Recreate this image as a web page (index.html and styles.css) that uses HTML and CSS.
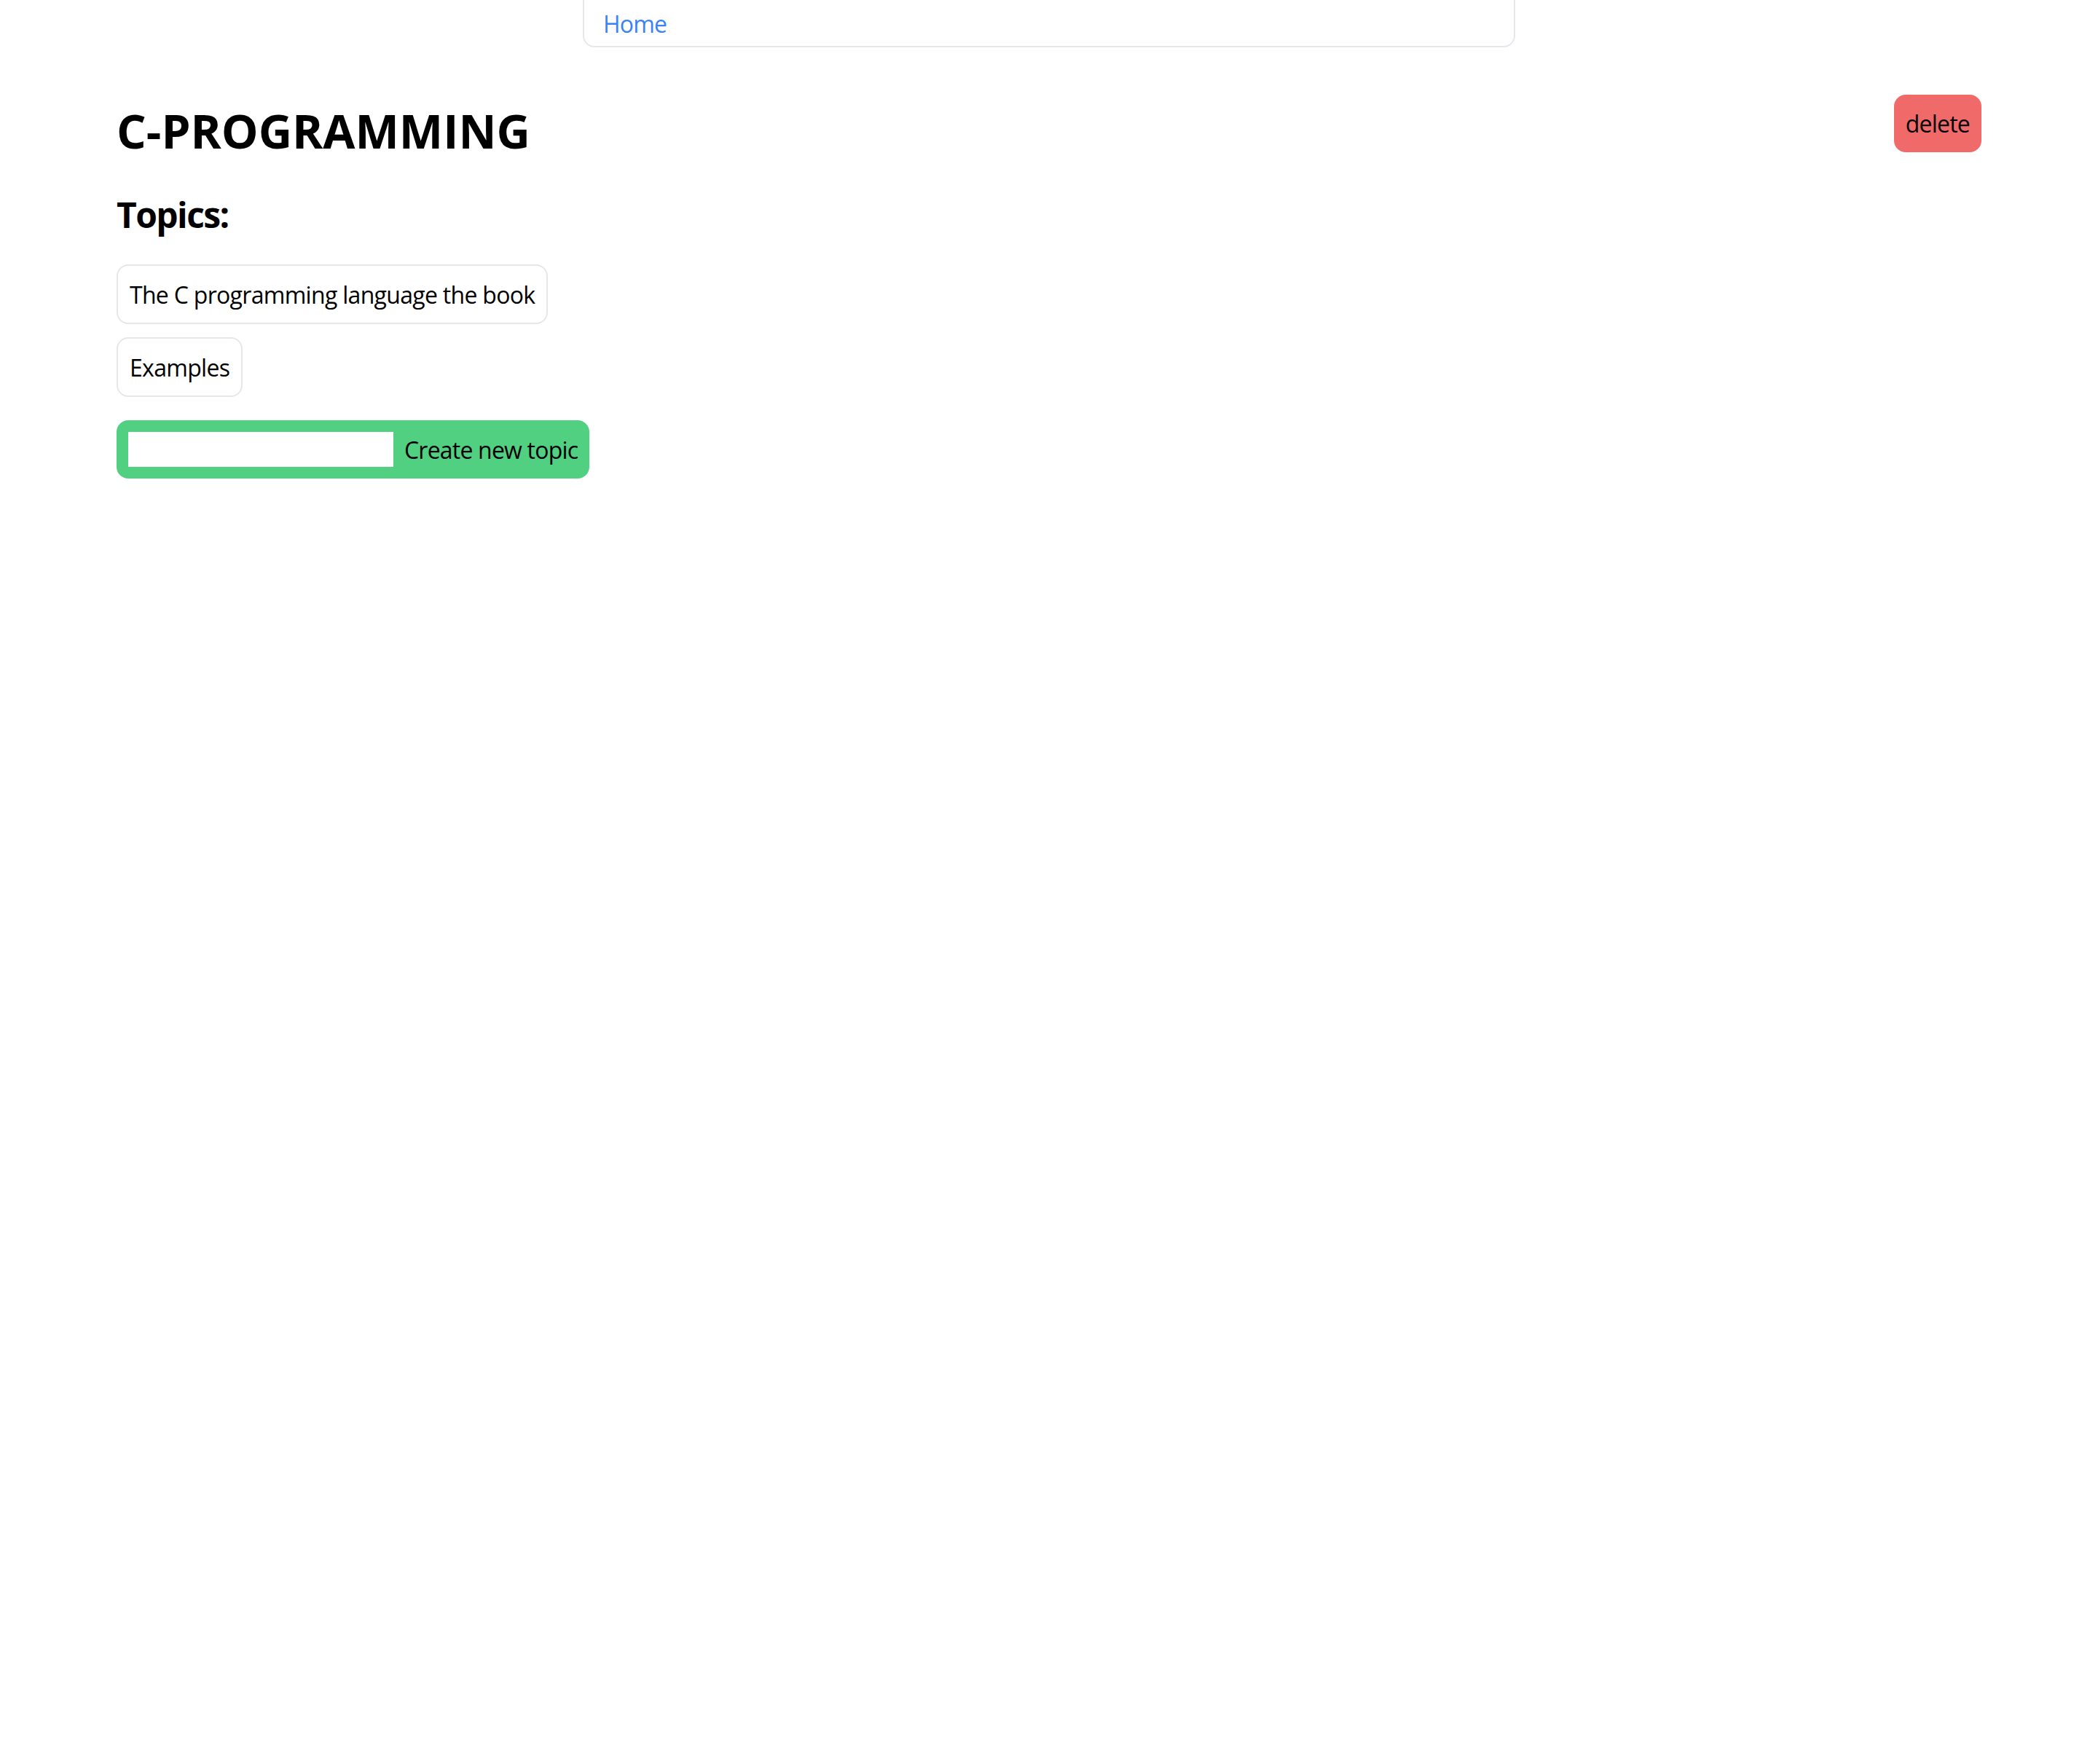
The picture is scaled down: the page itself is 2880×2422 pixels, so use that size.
FILE: index.html
```html
<!DOCTYPE html>
<html lang="en">
<head>
<meta charset="utf-8">
<title>C-PROGRAMMING</title>
<link rel="stylesheet" href="styles.css">
</head>
<body>
<nav class="topnav">
  <a class="nav-link" href="#">Home</a>
</nav>
<main class="page">
  <div class="title-row">
    <h1 class="title">C-PROGRAMMING</h1>
    <button class="btn-delete" type="button">delete</button>
  </div>
  <h2 class="subtitle">Topics:</h2>
  <ul class="topic-list">
    <li><a class="topic" href="#">The C programming language the book</a></li>
    <li><a class="topic" href="#">Examples</a></li>
  </ul>
  <form class="new-topic">
    <input class="new-topic-input" type="text" aria-label="Topic name">
    <button class="new-topic-btn" type="button">Create new topic</button>
  </form>
</main>
</body>
</html>
```
FILE: styles.css
```css
* { box-sizing: border-box; }

html, body {
  margin: 0;
  padding: 0;
  background: #ffffff;
}

body {
  font-family: "Open Sans", "Noto Sans", sans-serif;
  font-size: 32px;
  line-height: 48px;
  color: #000000;
}

.topnav {
  width: 1280px;
  margin: 0 auto;
  padding: 9px 26px 6px;
  border: 2px solid #e5e7eb;
  border-top: 0;
  border-radius: 0 0 16px 16px;
  background: #ffffff;
}

.nav-link {
  color: #3b82f6;
  text-decoration: none;
  letter-spacing: -0.8px;
}

.page {
  padding: 0 160px;
}

.title-row {
  display: flex;
  justify-content: space-between;
  align-items: flex-start;
}

.title {
  margin: 71px 0 0;
  font-size: 64px;
  line-height: 88px;
  font-weight: 700;
}

.btn-delete {
  margin-top: 65px;
  padding: 16px 16px 15px;
  border: 0;
  border-radius: 16px;
  background: #f16a6a;
  color: #000000;
  font: inherit;
  letter-spacing: -0.8px;
  cursor: pointer;
}

.subtitle {
  margin: 35px 0 0;
  font-size: 48px;
  line-height: 72px;
  font-weight: 700;
  letter-spacing: -1.6px;
}

.topic-list {
  list-style: none;
  margin: 32px 0 0;
  padding: 0;
  display: flex;
  flex-direction: column;
  align-items: flex-start;
  gap: 18px;
}

.topic {
  display: block;
  padding: 16px 16px 14px;
  border: 2px solid #e5e7eb;
  border-radius: 16px;
  color: #000000;
  text-decoration: none;
  letter-spacing: -0.7px;
}

.new-topic {
  display: inline-flex;
  align-items: center;
  gap: 15px;
  margin-top: 32px;
  padding: 16px;
  border-radius: 16px;
  background: #50d080;
}

.new-topic-input {
  width: 364px;
  height: 48px;
  border: 0;
  margin: 0;
  padding: 0 8px;
  background: #ffffff;
  font: inherit;
  outline: none;
}

.new-topic-btn {
  height: 48px;
  padding: 2px 0 0;
  border: 0;
  background: transparent;
  color: #000000;
  font: inherit;
  line-height: 46px;
  letter-spacing: -0.8px;
  cursor: pointer;
}
```
